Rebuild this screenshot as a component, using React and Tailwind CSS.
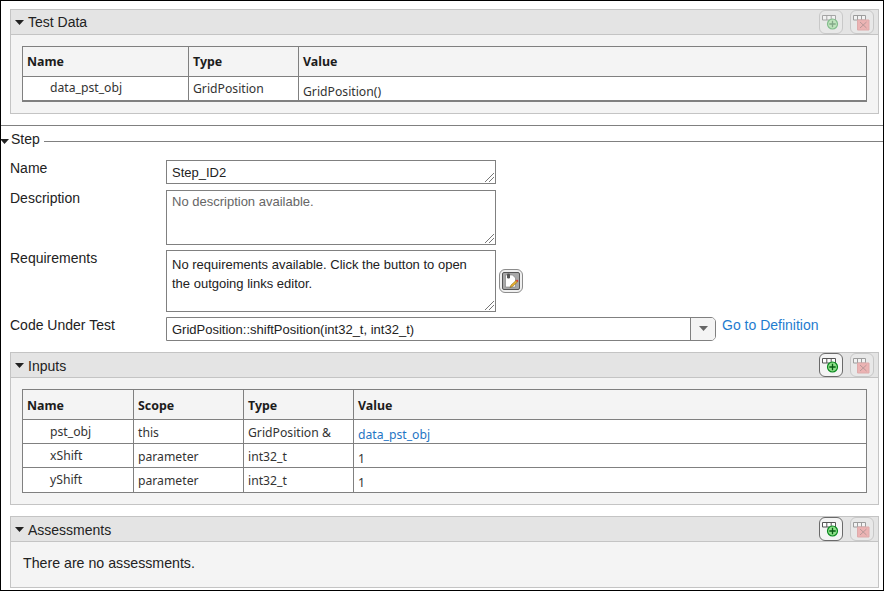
const sans = "font-['Liberation_Sans',Arial,sans-serif]";
const cell = "font-['Noto_Sans','Open_Sans',sans-serif]";

function Caret({ className = "" }) {
  return (
    <svg width="9" height="5" viewBox="0 0 9 5" className={className}>
      <path d="M0 0h9L4.5 5z" fill="#222" />
    </svg>
  );
}

function AddRowIcon({ active }) {
  return (
    <span
      className={`flex h-[24px] w-[24px] items-center justify-center rounded-[6px] border ${
        active ? "border-[#6a6a6a] bg-[#f4f4f4]" : "border-[#c8c8c8] bg-[#e8e8e8]"
      }`}
    >
      <svg width="20" height="20" viewBox="0 0 20 20">
        <g opacity={active ? 1 : 0.45}>
          <path d="M1.5 3.5h13v4.5h-13z" fill="#fff" stroke="#555" />
          <path d="M5.8 3.5v4.5M10.2 3.5v4.5" stroke="#555" />
          <circle cx="11.5" cy="12" r="5" fill="#8fe08a" stroke="#0a8a1f" strokeWidth="1.2" />
          <path d="M11.5 8.8v6.4M8.3 12h6.4" stroke="#075c14" strokeWidth="1.3" />
        </g>
      </svg>
    </span>
  );
}

function DeleteRowIcon() {
  return (
    <span className="flex h-[24px] w-[24px] items-center justify-center rounded-[6px] border border-[#c8c8c8] bg-[#e8e8e8]">
      <svg width="20" height="20" viewBox="0 0 20 20">
        <g opacity="0.5">
          <path d="M1.5 3.5h12v4.5h-12z" fill="#fff" stroke="#555" />
          <path d="M5.5 3.5v4.5M9.5 3.5v4.5" stroke="#555" />
          <path d="M5.5 8h11.5v10H5.5z" fill="#f08080" stroke="#d87070" />
          <path d="M8 10l6.5 6M14.5 10L8 16" stroke="#8a4a4a" strokeWidth="1" />
        </g>
      </svg>
    </span>
  );
}

function Panel({ title, canAdd, children }) {
  return (
    <section className="border border-[#c4c4c4] bg-[#f4f4f4]">
      <header className="flex h-[25px] items-center border-b border-[#c4c4c4] bg-[#e4e4e4] pl-[4px] pr-[4px]">
        <Caret className={canAdd ? "mt-[2px]" : ""} />
        <span className={`ml-[4px] text-[14px] text-[#222] ${sans} ${canAdd ? "mt-[3px]" : ""}`}>{title}</span>
        <div className="ml-auto flex gap-[7px]">
          <AddRowIcon active={canAdd} />
          <DeleteRowIcon />
        </div>
      </header>
      {children}
    </section>
  );
}

function DataTable({ widths, headers, rows, thickBottom, lower }) {
  return (
    <table className={`w-[844px] table-fixed border-collapse border border-[#808080] ${cell} text-[12.2px] text-[#333]`}>
      <colgroup>
        {widths.map((w, i) => (
          <col key={i} style={{ width: w }} />
        ))}
      </colgroup>
      <thead>
        <tr className="h-[30px]">
          {headers.map((h) => (
            <th
              key={h}
              className={`border border-[#808080] px-[4px] text-left text-[12.4px] font-bold text-[#1c1c1c] ${
                lower ? "pt-[4px]" : "pt-[2px]"
              }`}
            >
              {h}
            </th>
          ))}
        </tr>
      </thead>
      <tbody className={thickBottom ? "border-b-2 border-[#808080] bg-white" : "bg-white"}>
        {rows.map((r, n) => (
          <tr key={r[0]} className={lower && n === rows.length - 1 ? "h-[25px]" : "h-[24px]"}>
            {r.map((c, i) => {
              const last = i === r.length - 1;
              const pad = last ? "pt-[8px]" : i === 0 ? (lower ? "pt-[2px]" : "") : lower ? "pt-[4px]" : "pt-[2px]";
              return (
                <td
                  key={i}
                  className={`border border-[#808080] p-0 leading-none ${i === 0 ? "pl-[27px]" : "pl-[4px]"} ${pad} ${
                    c === "data_pst_obj" && last ? "text-[#1f75c4]" : ""
                  }`}
                >
                  {c}
                </td>
              );
            })}
          </tr>
        ))}
      </tbody>
    </table>
  );
}

function Grip() {
  return (
    <svg width="9" height="9" viewBox="0 0 9 9" className="absolute bottom-[1px] right-[1px]">
      <path d="M0 9L9 0M4 9L9 4" stroke="#666" strokeWidth="0.9" />
    </svg>
  );
}

function FieldRow({ label, className = "", children }) {
  return (
    <div className={`flex ${className}`}>
      <label className={`w-[156px] shrink-0 text-[14px] leading-[16px] text-[#222] ${sans}`}>
        {label}
      </label>
      {children}
    </div>
  );
}

function TextBox({ h, className = "", children }) {
  return (
    <div
      className={`relative w-[330px] border border-[#808080] bg-white pl-[5px] text-[13px] text-[#222] ${sans} ${className}`}
      style={{ height: h }}
    >
      {children}
      <Grip />
    </div>
  );
}

export default function App() {
  return (
    <div className="box-border h-[591px] w-[884px] overflow-hidden border border-black bg-white">
      <div className="ml-[9px] mr-[4px] mt-[8px]">
        <Panel title="Test Data">
          <div className="px-[11px] pb-[11px] pt-[11px]">
            <DataTable
              widths={[166, 110, 568]}
              headers={["Name", "Type", "Value"]}
              rows={[["data_pst_obj", "GridPosition", "GridPosition()"]]}
              thickBottom
            />
          </div>
        </Panel>
      </div>

      <div className="mt-[11px] border-t border-[#808080]">
        <div className="box-border flex h-[26px] items-center pt-[2px]">
          <Caret className="-ml-[1px] mt-[4px]" />
          <span className={`ml-[2px] text-[14px] text-[#222] ${sans}`}>Step</span>
          <div className="ml-[4px] mt-[3px] h-px flex-1 bg-[#808080]" />
        </div>

        <div className="mt-[8px] pl-[9px]">
          <FieldRow label="Name">
            <TextBox h={24} className="leading-[24px]">Step_ID2</TextBox>
          </FieldRow>
          <FieldRow label="Description" className="mt-[6px]">
            <TextBox h={55} className="pt-[4px] leading-[14px] !text-[#666]">No description available.</TextBox>
          </FieldRow>
          <FieldRow label="Requirements" className="mt-[5px]">
            <TextBox h={62} className="pr-[24px] pt-[4px] leading-[19px]">
              No requirements available. Click the button to open the outgoing links editor.
            </TextBox>
            <button className="ml-[3px] mt-[19px] flex h-[24px] w-[24px] items-center justify-center rounded-[6px] border border-[#8c8c8c] bg-[#f0f0f0]">
              <svg width="18" height="18" viewBox="0 0 18 18">
                <rect x="0.5" y="0.5" width="17" height="17" rx="1.5" fill="#a8a8a8" stroke="#555" />
                <path d="M3.5 3h7l3 3v9h-10z" fill="#fff" stroke="#777" strokeWidth="0.6" />
                <rect x="5" y="1.5" width="3" height="5" rx="1.2" fill="#555" />
                <path d="M8 15.5l1-2.5 5-4.5 1.5 1.5-5 4.5z" fill="#eab12f" stroke="#7a5a10" strokeWidth="0.5" />
                <path d="M14 8.5l1.5 1.5 1-1L15 7.5z" fill="#d9362b" />
              </svg>
            </button>
          </FieldRow>
          <FieldRow label="Code Under Test" className="mt-[5px]">
            <div className={`flex h-[24px] w-[550px] overflow-hidden rounded-r-[5px] border border-[#808080] bg-white text-[13px] leading-[24px] text-[#222] ${sans}`}>
              <span className="flex-1 pl-[5px]">GridPosition::shiftPosition(int32_t, int32_t)</span>
              <span className="flex w-[25px] items-center justify-center border-l border-[#808080] bg-[#f4f4f4]">
                <svg width="9" height="5" viewBox="0 0 9 5">
                  <path d="M0 0h9L4.5 5z" fill="#666" />
                </svg>
              </span>
            </div>
            <a className={`ml-[6px] text-[14px] leading-[16px] text-[#1f7ccf] ${sans}`}>Go to Definition</a>
          </FieldRow>
        </div>

        <div className="ml-[9px] mr-[4px] mt-[11px] flex flex-col gap-[11px]">
          <Panel title="Inputs" canAdd>
            <div className="px-[11px] pb-[11px] pt-[11px]">
              <DataTable
                widths={[111, 110, 110, 513]}
                headers={["Name", "Scope", "Type", "Value"]}
                rows={[
                  ["pst_obj", "this", "GridPosition &", "data_pst_obj"],
                  ["xShift", "parameter", "int32_t", "1"],
                  ["yShift", "parameter", "int32_t", "1"],
                ]}
                lower
              />
            </div>
          </Panel>
          <Panel title="Assessments" canAdd>
            <p className={`h-[45px] pl-[12px] pt-[13px] text-[14.2px] leading-[16px] text-[#222] ${sans}`}>
              There are no assessments.
            </p>
          </Panel>
        </div>
      </div>
    </div>
  );
}
